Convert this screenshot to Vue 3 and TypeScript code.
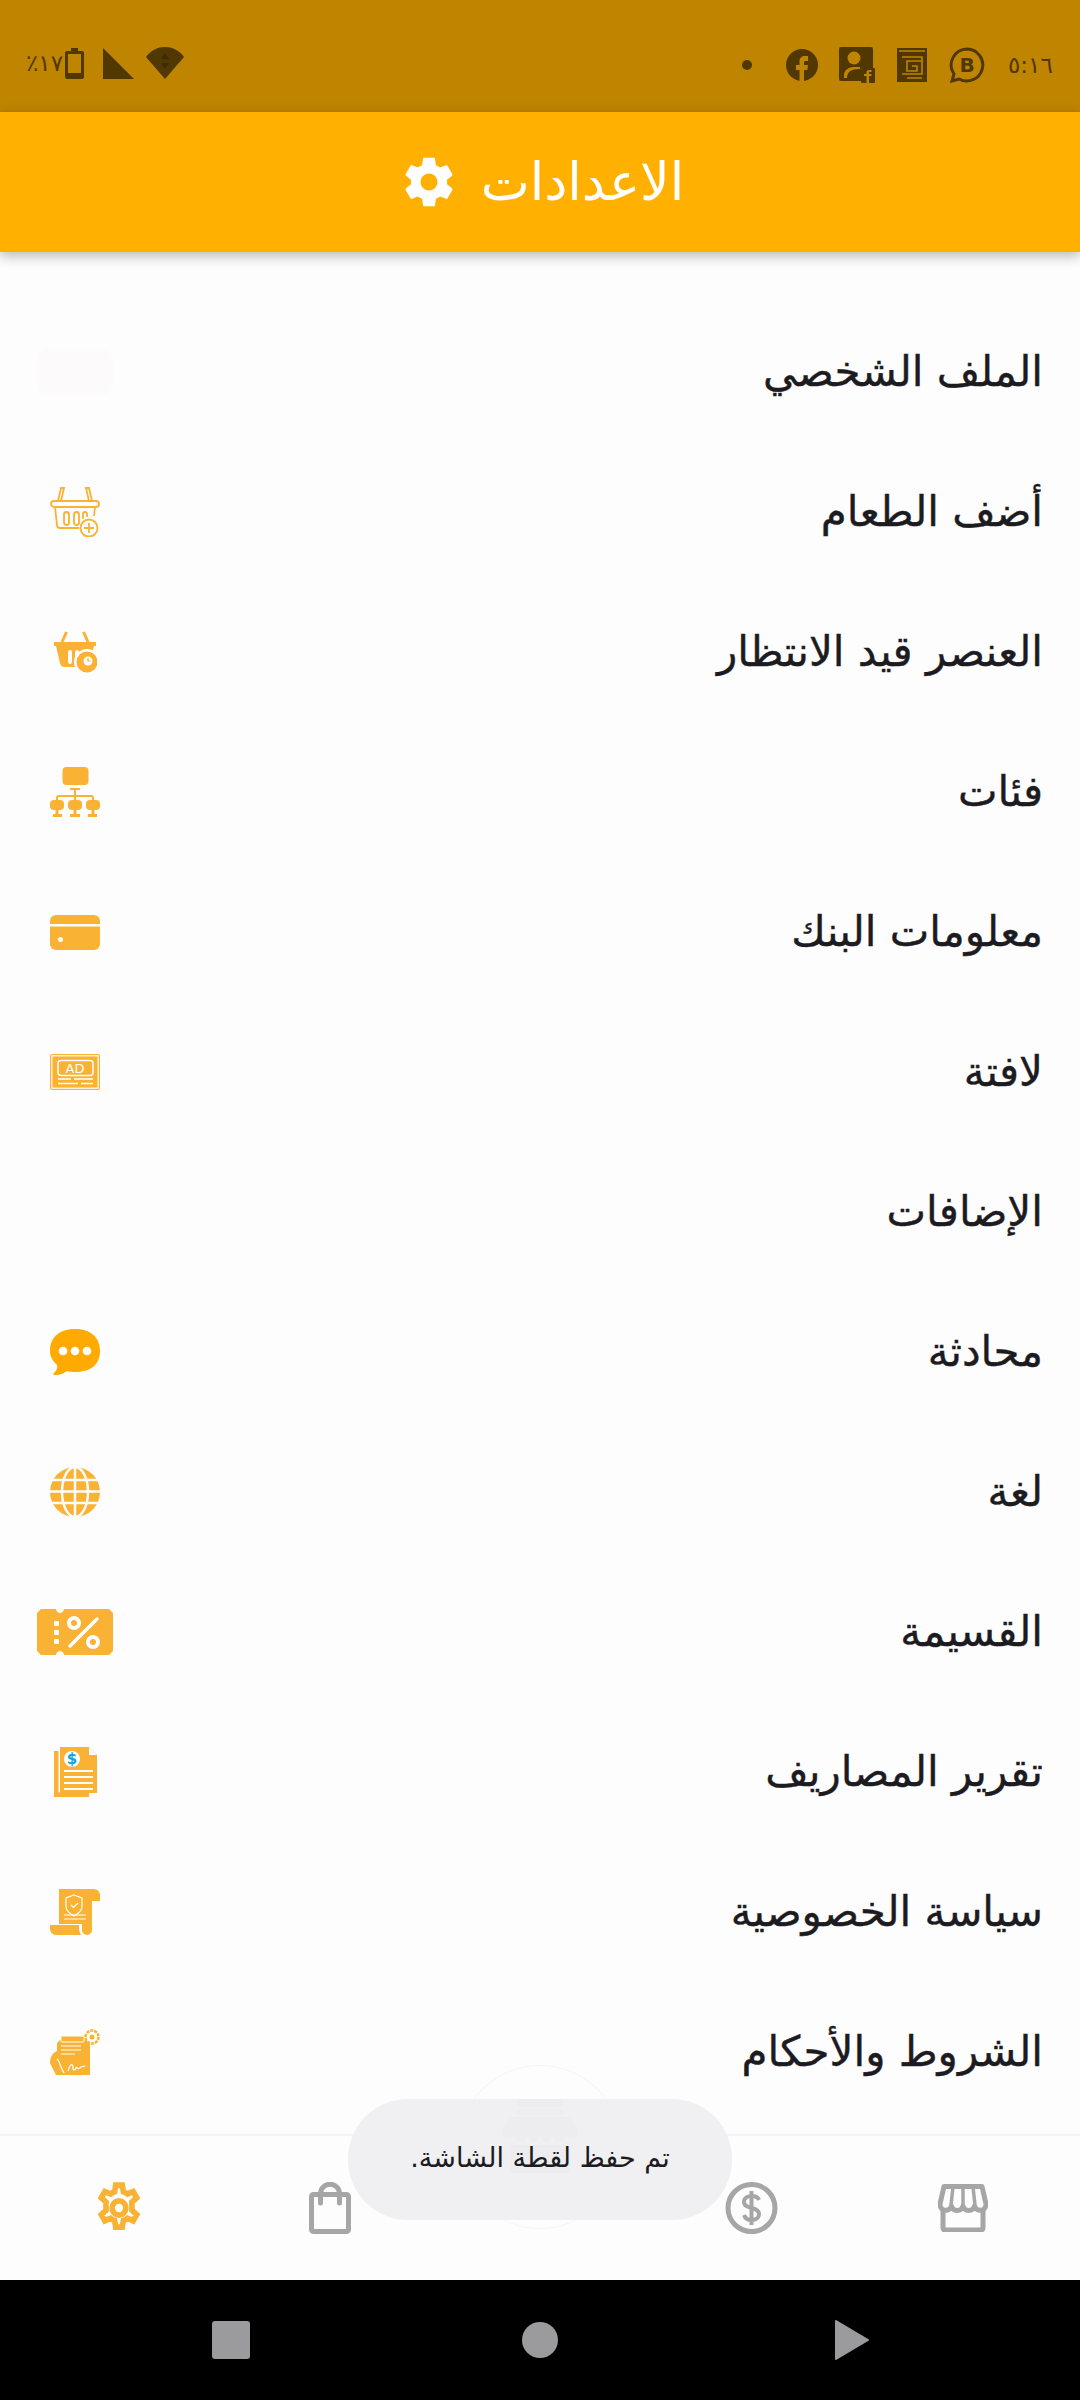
<template>
  <div class="screen">
    <div class="status">
      <div class="status-right">
        <span class="clock">٥:١٦</span>
        <svg class="st-b" viewBox="0 0 36 36"><path d="M18 2a16 16 0 1 1-8 30l-7 2 2-7A16 16 0 0 1 18 2z" fill="none" stroke="#513800" stroke-width="3"/><text x="18" y="25" text-anchor="middle" class="st-b-text">B</text></svg>
        <svg class="st-g" viewBox="0 0 30 34"><path d="M0 0h30v34H0z" fill="#513800"/><path d="M2 3h26M5 9h20v17H5M10 30h15M25 13H10v10h10v-5h-5" fill="none" stroke="#bf8400" stroke-width="1.600"/></svg>
        <svg class="st-p" viewBox="0 0 36 36"><path d="M2 0h30a2 2 0 0 1 2 2v19H22v13H2a2 2 0 0 1-2-2V2a2 2 0 0 1 2-2z" fill="#513800"/><circle cx="15" cy="11" r="6.500" fill="#bf8400"/><path d="M5 31v-3c0-5 5-8 10-8h6v2c-7-.5-13 2-13 9z" fill="#bf8400"/><rect x="22" y="21" width="14" height="15" rx="1" fill="#513800"/><path d="M30 36v-7h2.500v-2H30v-2h2.500v-2H30a2.500 2.500 0 0 0-2.500 2.500V27H25v2h2.500v7z" fill="#bf8400"/></svg>
        <svg class="st-f" viewBox="0 0 32 32"><circle cx="16" cy="16" r="16" fill="#513800"/><path d="M13.500 32V21H10v-5h3.500v-3.500C13.500 9 15.500 7 19 7h3v5h-2c-1.500 0-2 .6-2 2v2h4l-.7 5H18v11z" fill="#bf8400"/></svg>
        <i class="st-dot"></i>
      </div>
      <div class="status-left">
        <svg class="st-wifi" viewBox="0 0 38 32"><path d="M0 10C5 3 12 0 19 0s14 3 19 10L19 32z" fill="#513800"/><path d="M19 6l4 6h-8zM19 22l4-6h-8z" fill="#3d2a00"/></svg>
        <svg class="st-sig" viewBox="0 0 31 31"><path d="M0 0l31 31H0z" fill="#513800"/></svg>
        <svg class="st-bat" viewBox="0 0 19 31"><path d="M6 0h7v3h4a2 2 0 0 1 2 2v24a2 2 0 0 1-2 2H2a2 2 0 0 1-2-2V5a2 2 0 0 1 2-2h4z" fill="#513800"/><rect x="3" y="6" width="13" height="19" fill="#bf8400"/></svg>
        <span class="pct">٪١٧</span>
      </div>
    </div>

    <header class="bar">
      <span class="bar-title">الاعدادات</span>
      <svg class="bar-gear" viewBox="0 0 24 24"><path d="M19.430 12.980c.04-.32.07-.64.07-.98s-.03-.66-.07-.98l2.110-1.650c.19-.15.240-.42.120-.64l-2-3.460c-.12-.22-.39-.3-.61-.22l-2.490 1c-.52-.4-1.080-.73-1.690-.98l-.38-2.650A.488.488 0 0 0 14 2h-4c-.25 0-.46.18-.49.42l-.38 2.650c-.61.25-1.170.59-1.690.98l-2.490-1c-.23-.09-.49 0-.61.22l-2 3.460c-.13.22-.07.49.12.64l2.110 1.650c-.04.32-.07.65-.07.98s.03.66.07.98l-2.110 1.650c-.19.15-.24.42-.12.64l2 3.460c.12.22.39.3.61.22l2.490-1c.52.4 1.080.73 1.690.98l.38 2.650c.03.24.24.42.49.42h4c.25 0 .46-.18.49-.42l.38-2.650c.61-.25 1.170-.59 1.690-.98l2.490 1c.23.09.49 0 .61-.22l2-3.460c.12-.22.07-.49-.12-.64l-2.110-1.650zM12 15.500c-1.930 0-3.500-1.570-3.500-3.500s1.570-3.500 3.500-3.500 3.500 1.570 3.500 3.500-1.570 3.500-3.500 3.500z" fill="#fff"/></svg>
    </header>

    <main class="list">
      <div v-for="row in rows" :key="row.label" class="row">
        <span class="row-label">{{ row.label }}</span>
        <span class="row-icon">
          <i v-if="row.icon === 'ghost'" class="ghost"></i>
          <svg v-else-if="row.icon === 'basketAdd'" width="50" height="50" viewBox="0 0 50 50" fill="none" stroke="#f9b233" stroke-width="1.800">
            <path d="M8 14l3-13h3l-3 13M42 14l-3-13h-3l3 13"/>
            <rect x="1" y="14" width="48" height="6" rx="3"/>
            <path d="M5 20l2 18a3 3 0 0 0 3 3h19M45 20l-1 9"/>
            <rect x="14" y="25" width="5" height="13" rx="2.500"/><rect x="24" y="25" width="5" height="13" rx="2.500"/><path d="M33 32v-5a2 2 0 0 1 4 0v3"/>
            <circle cx="39" cy="41" r="8.500" fill="#fefdfe"/><path d="M39 36v10M34 41h10"/>
          </svg>
          <svg v-else-if="row.icon === 'basketClock'" width="43" height="42" viewBox="0 0 43 42">
            <path d="M8 11L12.500 1M34 11L29.500 1" stroke="#f9b233" stroke-width="3" fill="none"/>
            <path d="M0 11h42v4H40l-4 12-14 9H11a5 5 0 0 1-5-4L2 15H0z" fill="#f9b233"/>
            <rect x="14" y="19" width="4" height="14" rx="2" fill="#fefdfe"/><rect x="21" y="19" width="4" height="9" rx="2" fill="#fefdfe"/>
            <circle cx="33" cy="31" r="13" fill="#fefdfe"/><circle cx="33" cy="31" r="10.500" fill="#f9b233"/>
            <circle cx="34" cy="30" r="4.500" fill="#fefdfe"/><path d="M34 27v3h2.500" stroke="#f9b233" stroke-width="1.200" fill="none"/>
          </svg>
          <svg v-else-if="row.icon === 'tree'" width="50" height="50" viewBox="0 0 50 50" fill="#f9b233">
            <rect x="12.500" y="0" width="26" height="18" rx="4"/>
            <path d="M20 21h10v2h-4v5h15a3 3 0 0 1 3 3v3h-2v-3a1 1 0 0 0-1-1H26v4h-2v-4H9a1 1 0 0 0-1 1v3H6v-3a3 3 0 0 1 3-3h15v-5h-4z"/>
            <rect x="0" y="33" width="14" height="10" rx="4"/><rect x="5.500" y="42" width="3" height="6"/><rect x="3" y="47" width="9" height="3"/>
            <rect x="18" y="33" width="14" height="10" rx="4"/><rect x="23.500" y="42" width="3" height="6"/><rect x="20" y="47" width="10" height="3"/>
            <rect x="36" y="33" width="14" height="10" rx="4"/><rect x="41.500" y="42" width="3" height="6"/><rect x="38" y="47" width="9" height="3"/>
          </svg>
          <svg v-else-if="row.icon === 'card'" width="50" height="35" viewBox="0 0 50 35">
            <rect width="50" height="35" rx="6" fill="#f9b233"/><rect y="9" width="50" height="2.500" fill="#fefdfe"/><circle cx="10.500" cy="24.500" r="2.500" fill="#fefdfe"/>
          </svg>
          <svg v-else-if="row.icon === 'ad'" width="50" height="36" viewBox="0 0 50 36">
            <rect width="50" height="36" rx="2" fill="#f9b233"/>
            <rect x="1.800" y="1.800" width="46.400" height="32.400" fill="none" stroke="#fff" stroke-width="1.200"/>
            <rect x="8" y="6.500" width="35" height="15" rx="3" fill="none" stroke="#fff" stroke-width="1.500"/>
            <text x="25" y="19" text-anchor="middle" class="ad-text">AD</text>
            <path d="M8 25h13M24 25h19M8 29.500h20M31 29.500h12" stroke="#fff" stroke-width="1.500"/>
          </svg>
          <svg v-else-if="row.icon === 'chat'" width="50" height="46" viewBox="0 0 50 46">
            <path d="M25 0c14 0 25 7 25 22S39 43 25 43c-3 0-6-.4-8-1-3 2-6 4-12 4-2 0-2-1-1-2 2-2 4-5 3-8C3 32 0 28 0 22 0 7 11 0 25 0z" fill="#ffaa00"/>
            <circle cx="13" cy="22" r="4.300" fill="#fff"/><circle cx="25" cy="22" r="4.300" fill="#fff"/><circle cx="37" cy="22" r="4.300" fill="#fff"/>
          </svg>
          <svg v-else-if="row.icon === 'globe'" width="50" height="50" viewBox="0 0 50 50">
            <circle cx="25" cy="25" r="25" fill="#f9b233"/>
            <g fill="none" stroke="#fefdfe" stroke-width="2.500"><path d="M0 13h50M0 24.500h50M0 36h50M25 0v50"/><ellipse cx="25" cy="25" rx="13" ry="25"/></g>
          </svg>
          <svg v-else-if="row.icon === 'coupon'" width="76" height="46" viewBox="0 0 76 46">
            <path d="M4 0h15c0 2 2 4 4 4s4-2 4-4h45l4 4v38l-4 4H27c0-2-2-4-4-4s-4 2-4 4H4l-4-4V4z" fill="#f9b233"/>
            <rect x="17" y="12" width="5" height="5" rx="1" fill="#fefdfe"/><rect x="17" y="21" width="5" height="5" rx="1" fill="#fefdfe"/><rect x="17" y="30" width="5" height="5" rx="1" fill="#fefdfe"/>
            <path d="M33 37l27-27" stroke="#fefdfe" stroke-width="3.500" stroke-linecap="round"/>
            <circle cx="37" cy="14" r="5" fill="none" stroke="#fefdfe" stroke-width="4"/><circle cx="56" cy="33" r="5" fill="none" stroke="#fefdfe" stroke-width="4"/>
          </svg>
          <svg v-else-if="row.icon === 'report'" width="43" height="50" viewBox="0 0 43 50">
            <path d="M0 4h4.500v41.500H35V50H0z" fill="#f9b233"/>
            <path d="M6 0h29l8 8v38H6z" fill="#f9b233"/><path d="M35 0l8 8h-8z" fill="#fefdfe"/>
            <circle cx="18" cy="12" r="8" fill="#fefdfe"/>
            <text x="18" y="17" text-anchor="middle" class="dollar-text">$</text>
            <path d="M10 24h29M10 30h29M10 36h29M10 42h29" stroke="#fefdfe" stroke-width="1.800"/>
          </svg>
          <svg v-else-if="row.icon === 'privacy'" width="50" height="46" viewBox="0 0 50 46">
            <path d="M9 0h34a7 7 0 0 0-1 5v36a5 5 0 0 1-10 0v-6H9z" fill="#f9b233"/>
            <path d="M42 0h2a6 6 0 0 1 6 6v6h-8z" fill="#f9b233"/>
            <path d="M0 36h29v3c0 3 1 5 2 7H6a6 6 0 0 1-6-6z" fill="#f9b233"/>
            <path d="M24 6l8 3v8c0 5-4 8-8 10-4-2-8-5-8-10V9z" fill="none" stroke="#fefdfe" stroke-width="1.200"/>
            <path d="M21 16l2.500 2.500L28 14" fill="none" stroke="#fefdfe" stroke-width="1.200"/>
            <path d="M14 26h22M14 30h22" stroke="#fefdfe" stroke-width="1"/>
          </svg>
          <svg v-else-if="row.icon === 'terms'" width="50" height="46" viewBox="0 0 50 46">
            <path d="M7 14l3-3h30v35H6L0 34c0-5 2-10 7-12z" fill="#f9b233"/>
            <rect x="11" y="7" width="23" height="6" rx="1" fill="#f9b233" stroke="#fefdfe"/>
            <path d="M11 17h20M11 21h20M11 25h14" stroke="#fefdfe" stroke-width="1.200"/>
            <path d="M18 42c3-10 5-6 5-3s3 2 3 0 3 2 4 0 3-1 5-2M7 30c3 2 3 8 7 14" fill="none" stroke="#fefdfe" stroke-width="1.300"/>
            <circle cx="42" cy="8" r="6.500" fill="#fefdfe" stroke="#f9b233" stroke-width="2.500" stroke-dasharray="3 1"/>
            <circle cx="42" cy="8" r="2.500" fill="#f9b233"/>
          </svg>
        </span>
      </div>
    </main>

    <nav class="tabs">
      <span class="tab">
        <svg width="50" height="52" viewBox="0 0 24 24" fill="none" stroke="#f9b233" stroke-width="2.700" preserveAspectRatio="none">
          <path d="M13.600 1.500h-3.200l-.5 3c-.7.2-1.300.6-1.900 1L5.200 4.400 3.500 7.300l2.300 2c-.1.900-.1 1.800 0 2.700v1l-2.300 2 1.700 2.900 2.800-1.100c.6.400 1.200.8 1.900 1l.5 3h3.200l.5-3c.7-.2 1.300-.6 1.900-1l2.800 1.100 1.700-2.900-2.300-2v-3.700l2.300-2-1.700-2.900L16 5.500c-.6-.4-1.200-.8-1.900-1z"/>
          <circle cx="12" cy="12" r="3.300"/>
        </svg>
      </span>
      <span class="tab">
        <svg width="42" height="52" viewBox="0 0 42 52" fill="none" stroke="#a6a6a6" stroke-width="5">
          <rect x="2.500" y="12.500" width="37" height="37" rx="2"/>
          <path d="M11.500 21V11.700a9.500 9.500 0 0 1 19 0V21" stroke-linecap="round"/>
        </svg>
      </span>
      <span class="tab"></span>
      <span class="tab">
        <svg width="53" height="52" viewBox="0 0 53 52" fill="none" stroke="#a6a6a6" stroke-width="5">
          <circle cx="26.500" cy="26" r="23.500"/>
          <path d="M34 18c-1-3-4-4-7.500-4S19 16 19 20c0 8 15 4 15 12 0 4-4 6-7.500 6S20 36 19 33M26.500 9v34" stroke-width="4"/>
        </svg>
      </span>
      <span class="tab">
        <svg width="50" height="48" viewBox="0 0 50 48" fill="none" stroke="#a6a6a6" stroke-width="5">
          <path d="M5 26v18a2 2 0 0 0 2 2h36a2 2 0 0 0 2-2V26"/>
          <path d="M6 2.500h38l4 17.500c0 8-10 8-11.500 2-1.500 6-10 6-11.500 0-1.500 6-10 6-11.500 0C12 28 2 28 2 20z" stroke-linejoin="round"/>
          <path d="M15 3l-2 18M25 3v18M35 3l2 18" stroke-width="3.500"/>
        </svg>
      </span>
      <div class="fab">
        <svg width="76" height="74" viewBox="0 0 76 74" fill="#a6a6a6">
          <rect x="15" y="0" width="46" height="8"/>
          <rect x="15" y="11" width="46" height="4"/>
          <path d="M8 18h60l8 14a6 6 0 0 1-12 4 6 6 0 0 1-13 0 6 6 0 0 1-13 0 6 6 0 0 1-13 0 6 6 0 0 1-13 0 6 6 0 0 1-12-4z"/>
          <path d="M8 46h60v24a4 4 0 0 1-4 4H12a4 4 0 0 1-4-4z"/>
        </svg>
      </div>
    </nav>

    <div class="toast">تم حفظ لقطة الشاشة.</div>

    <footer class="sysnav">
      <i class="sys-square"></i>
      <i class="sys-circle"></i>
      <svg class="sys-back" width="34" height="40" viewBox="0 0 34 40"><path d="M1 1l32 19L1 39z" fill="#9b9a9c" stroke="#9b9a9c" stroke-width="2" stroke-linejoin="round"/></svg>
    </footer>
  </div>
</template>

<script setup lang="ts">
interface Row {
  label: string
  icon: string
}

const rows: Row[] = [
  { label: 'الملف الشخصي', icon: 'ghost' },
  { label: 'أضف الطعام', icon: 'basketAdd' },
  { label: 'العنصر قيد الانتظار', icon: 'basketClock' },
  { label: 'فئات', icon: 'tree' },
  { label: 'معلومات البنك', icon: 'card' },
  { label: 'لافتة', icon: 'ad' },
  { label: 'الإضافات', icon: 'none' },
  { label: 'محادثة', icon: 'chat' },
  { label: 'لغة', icon: 'globe' },
  { label: 'القسيمة', icon: 'coupon' },
  { label: 'تقرير المصاريف', icon: 'report' },
  { label: 'سياسة الخصوصية', icon: 'privacy' },
  { label: 'الشروط والأحكام', icon: 'terms' }
]
</script>

<style>
html,
body {
  margin: 0;
  background: #fff;
}
</style>

<style scoped>
.screen {
  position: relative;
  width: 1080px;
  height: 2400px;
  display: flex;
  flex-direction: column;
  overflow: hidden;
  background: #fefdfe;
  font-family: "DejaVu Sans", sans-serif;
}

.status {
  height: 112px;
  flex: none;
  background: #bf8400;
  display: flex;
  flex-direction: row-reverse;
  justify-content: space-between;
  align-items: flex-start;
  padding: 47px 28px 0 26px;
  box-sizing: border-box;
  color: #513800;
}

.status-right,
.status-left {
  display: flex;
  align-items: center;
  flex-direction: row-reverse;
}

.clock {
  font-size: 23px;
  width: 44px;
  margin-left: 23px;
  line-height: 34px;
  white-space: nowrap;
}

.st-b {
  width: 36px;
  height: 36px;
}

.st-b-text {
  font-size: 20px;
  font-weight: 700;
  fill: #513800;
}

.st-g {
  width: 30px;
  height: 34px;
  margin: 0 22px;
}

.st-p {
  width: 36px;
  height: 36px;
}

.st-f {
  width: 32px;
  height: 32px;
  margin-right: 21px;
}

.st-dot {
  width: 10px;
  height: 10px;
  border-radius: 50%;
  background: #513800;
  margin-right: 34px;
}

.st-wifi {
  width: 38px;
  height: 32px;
}

.st-sig {
  width: 31px;
  height: 31px;
  margin: 0 12px 0 14px;
}

.st-bat {
  width: 19px;
  height: 31px;
  margin-right: 5px;
}

.pct {
  width: 39px;
  font-size: 23px;
  line-height: 32px;
  white-space: nowrap;
}

.bar {
  height: 140px;
  flex: none;
  background: #ffb000;
  box-shadow: 0 4px 12px rgba(0, 0, 0, 0.28);
  display: flex;
  align-items: center;
  justify-content: center;
  gap: 23px;
  direction: rtl;
  position: relative;
  z-index: 1;
  padding-left: 4px;
}

.bar-title {
  color: #fff;
  font-size: 52px;
  line-height: 1;
}

.bar-gear {
  width: 58px;
  height: 58px;
}

.list {
  flex: 1;
  display: flex;
  flex-direction: column;
  padding-top: 50px;
  min-height: 0;
}

.row {
  height: 140px;
  flex: none;
  display: flex;
  flex-direction: row-reverse;
  align-items: center;
  justify-content: space-between;
  padding: 0 37px 0 37px;
}

.row-label {
  direction: rtl;
  font-size: 42px;
  line-height: 1;
  color: #1c1b1f;
  white-space: nowrap;
  -webkit-text-stroke: 0.4px #1c1b1f;
}

.row-icon {
  width: 76px;
  display: flex;
  justify-content: center;
  align-items: center;
}

.ghost {
  display: block;
  width: 72px;
  height: 44px;
  border-radius: 10px;
  background: #fcfafb;
  box-shadow: 0 0 8px #fcfafb;
}

.ad-text {
  font-size: 13px;
  fill: #fff;
}

.dollar-text {
  font-size: 15px;
  font-weight: 700;
  fill: #0aa5e0;
}

.tabs {
  height: 146px;
  flex: none;
  box-sizing: border-box;
  border-top: 2px solid #f5f3f5;
  background: #fefdfe;
  display: grid;
  grid-template-columns: repeat(5, 211px);
  align-items: center;
  padding-left: 13px;
  position: relative;
}

.tab {
  display: flex;
  justify-content: center;
  align-items: center;
}

.fab {
  position: absolute;
  left: 458px;
  top: -71px;
  width: 164px;
  height: 164px;
  border-radius: 50%;
  border: 1px solid #f6f4f6;
  background: #fefdfe;
  display: flex;
  justify-content: center;
  padding-top: 33px;
  box-sizing: border-box;
}

.toast {
  position: absolute;
  left: 348px;
  top: 2099px;
  width: 384px;
  height: 116px;
  padding-bottom: 5px;
  border-radius: 60px;
  background: rgba(239, 238, 240, 0.96);
  color: #1c1b1f;
  font-size: 27px;
  direction: rtl;
  display: flex;
  align-items: center;
  justify-content: center;
}

.sysnav {
  height: 120px;
  flex: none;
  background: #000;
  display: flex;
  align-items: center;
  padding-left: 212px;
  gap: 272px;
}

.sys-square {
  width: 38px;
  height: 38px;
  border-radius: 3px;
  background: #9b9a9c;
}

.sys-circle {
  width: 36px;
  height: 36px;
  border-radius: 50%;
  background: #9b9a9c;
}

.sys-back {
  margin-left: 5px;
}
</style>
